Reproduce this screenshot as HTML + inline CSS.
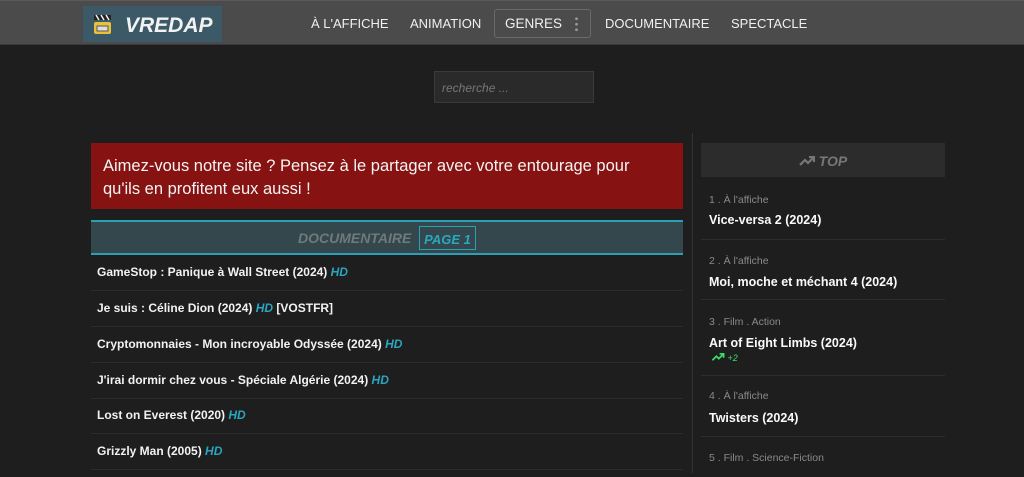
<!DOCTYPE html><html><head><meta charset="utf-8"><style>
*{margin:0;padding:0;box-sizing:border-box}
body{width:1024px;height:471px;overflow:hidden;background:#1e1e1e;font-family:"Liberation Sans",Arial,sans-serif;color:#fff;position:relative}
.hdr{position:absolute;left:0;top:0;width:1024px;height:45px;background:#4b4b4b;border-top:1px solid #5a5a5a;border-bottom:1px solid #3a3a3a}
.logo{position:absolute;left:83px;top:5px;width:139px;height:36px;background:#3b5966}
.logo span{position:absolute;left:42px;top:8px;font-size:21px;font-weight:bold;font-style:italic;color:#f2f2f2}
.nav{position:absolute;top:15px;font-size:13px;color:#f0f0f0;white-space:nowrap}
.gen{position:absolute;left:494px;top:8px;width:97px;height:29px;border:1px solid #6a6a6a;border-radius:3px}
.srch{position:absolute;left:434px;top:71px;width:160px;height:32px;background:#2a2a2a;border:1px solid #3a3a3a;font-size:12px;font-style:italic;color:#777;padding:9px 7px}
.vline{position:absolute;left:692px;top:133px;width:1px;height:340px;background:#333}
.red{position:absolute;left:91px;top:143px;width:592px;height:66px;background:#861212;padding:12px 12px;font-size:16.5px;line-height:23px;color:#f4f4f4}
.bar{position:absolute;left:91px;top:220px;width:592px;height:35px;background:#33474d;border-top:2px solid #2a9fb5;border-bottom:2px solid #2a9fb5}
.bar .d{position:absolute;left:207px;top:8px;font-size:14px;font-weight:bold;font-style:italic;color:#6f7a7c}
.bar .p{position:absolute;left:328px;top:4px;width:57px;height:24px;border:1px solid #2a9fb5;font-size:13px;font-weight:bold;font-style:italic;color:#2aa8c0;padding:5px 0;text-align:center;white-space:nowrap}
.row{position:absolute;left:91px;width:592px;height:36px;border-bottom:1px solid #2c2c2c;padding-left:6px;font-size:12px;font-weight:bold;color:#f2f2f2;white-space:nowrap}
.row i{color:#29a6c0}
.top{position:absolute;left:701px;top:143px;width:244px;height:34px;background:#2c2c2c;text-align:center;font-size:14px;font-weight:bold;font-style:italic;color:#777;padding-top:10px}
.it{position:absolute;left:701px;width:244px;border-bottom:1px solid #2e2e2e}
.it .c{position:absolute;left:8px;font-size:10.5px;color:#8a8a8a;white-space:nowrap}
.it .t{position:absolute;left:8px;font-size:12.5px;font-weight:bold;color:#fafafa;white-space:nowrap}
</style></head><body>
<div class="hdr">
<div class="logo"><svg style="position:absolute;left:9px;top:7px" width="22" height="22" viewBox="0 0 22 22"><rect x="2" y="9" width="17" height="12" rx="2" fill="#e8c23a"/><rect x="5" y="13" width="11" height="5" fill="#ddd" stroke="#555" stroke-width="1"/><path d="M2 2h17v5H2z" fill="#222"/><path d="M4 2l3 5M9 2l3 5M14 2l3 5" stroke="#eee" stroke-width="1.5"/></svg><span>VREDAP</span></div>
<div class="nav" style="left:311px">À L'AFFICHE</div>
<div class="nav" style="left:410px">ANIMATION</div>
<div class="gen"><span style="position:absolute;left:10px;top:6px;font-size:13.5px;color:#f0f0f0">GENRES</span><span style="position:absolute;left:80px;top:6px;width:3px;height:16px;background:radial-gradient(circle,#999 1.2px,transparent 1.6px) 0 0/3px 5.5px"></span></div>
<div class="nav" style="left:605px">DOCUMENTAIRE</div>
<div class="nav" style="left:731px">SPECTACLE</div>
</div>
<div class="srch">recherche ...</div>
<div class="vline"></div>
<div class="red">Aimez-vous notre site ? Pensez à le partager avec votre entourage pour qu'ils en profitent eux aussi !</div>
<div class="bar"><span class="d">DOCUMENTAIRE</span><span class="p">PAGE 1</span></div>
<div class="row" style="top:255px;padding-top:10px">GameStop : Panique à Wall Street (2024) <i>HD</i></div>
<div class="row" style="top:291px;padding-top:10px">Je suis : Céline Dion (2024) <i>HD</i> [VOSTFR]</div>
<div class="row" style="top:327px;padding-top:10px">Cryptomonnaies - Mon incroyable Odyssée (2024) <i>HD</i></div>
<div class="row" style="top:363px;padding-top:10px">J'irai dormir chez vous - Spéciale Algérie (2024) <i>HD</i></div>
<div class="row" style="top:398px;padding-top:10px">Lost on Everest (2020) <i>HD</i></div>
<div class="row" style="top:434px;padding-top:10px">Grizzly Man (2005) <i>HD</i></div>
<div class="top"><svg width="16" height="10" viewBox="0 0 16 10" style="vertical-align:0"><path d="M1 9l5-5 3 3 5-5M10 1h5v5" stroke="#777" stroke-width="2.2" fill="none"/></svg> TOP</div>
<div class="it" style="top:185px;height:55px"><span class="c" style="top:9px">1 . À l'affiche</span><span class="t" style="top:28px">Vice-versa 2 (2024)</span></div>
<div class="it" style="top:240px;height:60px"><span class="c" style="top:15px">2 . À l'affiche</span><span class="t" style="top:35px">Moi, moche et méchant 4 (2024)</span></div>
<div class="it" style="top:300px;height:76px"><span class="c" style="top:16px">3 . Film . Action</span><span class="t" style="top:36px">Art of Eight Limbs (2024)</span><span style="position:absolute;left:10px;top:53px;font-size:9px;font-style:italic;color:#3ddc6a;white-space:nowrap"><svg width="14" height="8" viewBox="0 0 16 10"><path d="M1 9l5-5 3 3 5-5M10 1h5v5" stroke="#3ddc6a" stroke-width="2.2" fill="none"/></svg> +2</span></div>
<div class="it" style="top:376px;height:61px"><span class="c" style="top:14px">4 . À l'affiche</span><span class="t" style="top:35px">Twisters (2024)</span></div>
<div class="it" style="top:437px;height:40px;border:0"><span class="c" style="top:15px">5 . Film . Science-Fiction</span></div>
</body></html>
